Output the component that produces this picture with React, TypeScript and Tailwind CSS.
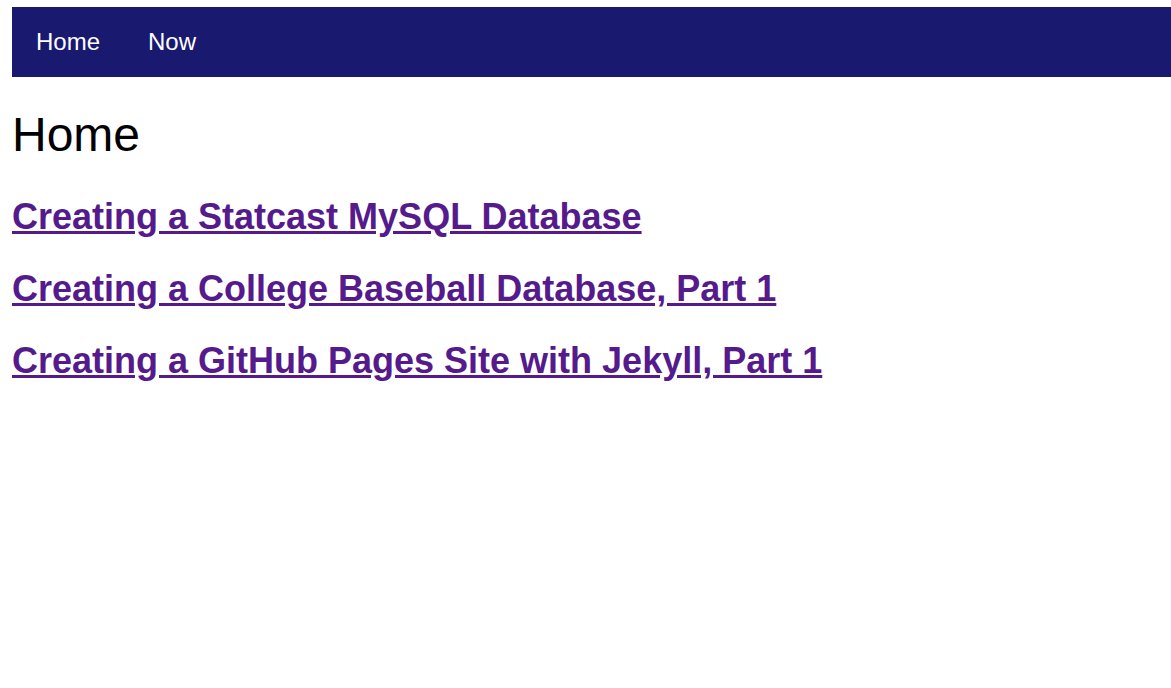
const posts = [
  "Creating a Statcast MySQL Database",
  "Creating a College Baseball Database, Part 1",
  "Creating a GitHub Pages Site with Jekyll, Part 1",
];

export default function App() {
  return (
    <div className="min-h-screen bg-white pl-[12px] pt-[7px] font-['Liberation_Sans',Arial,sans-serif] text-black">
      {/* навигация */}
      <nav className="flex h-[70px] items-center bg-[#191970] text-[24px] text-white">
        <a href="#" className="px-[24px] leading-normal">
          Home
        </a>
        <a href="#" className="px-[24px] leading-normal">
          Now
        </a>
      </nav>

      <h1 className="mt-[30px] text-[48px] leading-[55px] font-normal">Home</h1>

      {/* посты */}
      <div className="mt-[34px] flex flex-col gap-[31px]">
        {posts.map((title) => (
          <h2 key={title} className="text-[36px] leading-[41px] font-bold">
            <a href="#" className="text-[#551a8b] underline">
              {title}
            </a>
          </h2>
        ))}
      </div>
    </div>
  );
}
